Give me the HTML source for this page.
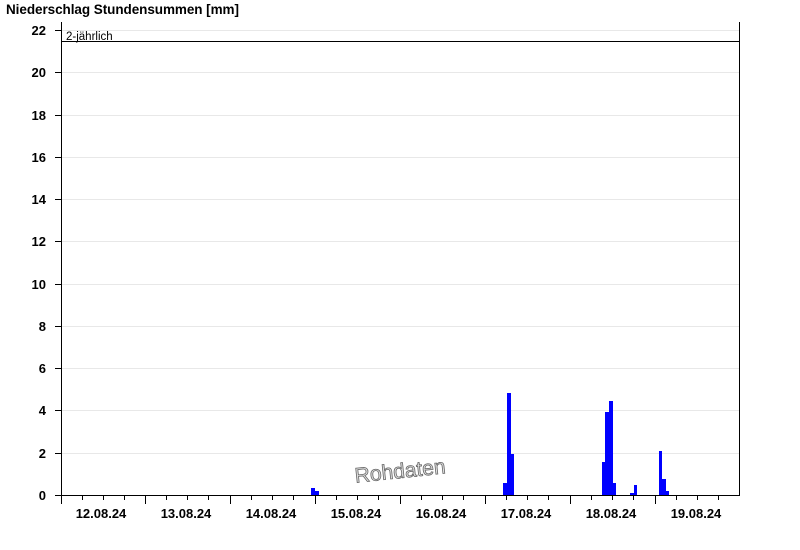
<!DOCTYPE html>
<html><head><meta charset="utf-8"><style>
html,body{margin:0;padding:0;background:#fff;width:800px;height:550px;overflow:hidden}
svg{display:block}
text{font-family:"Liberation Sans",Arial,sans-serif}
</style></head><body>
<svg width="800" height="550" viewBox="0 0 800 550" xmlns="http://www.w3.org/2000/svg">
<text x="6" y="14" font-size="13.5" font-weight="bold" fill="#000" textLength="233">Niederschlag Stundensummen [mm]</text>
<g stroke="#e8e8e8" stroke-width="1">
<line x1="61" x2="739" y1="453.5" y2="453.5"/><line x1="61" x2="739" y1="410.5" y2="410.5"/>
<line x1="61" x2="739" y1="368.5" y2="368.5"/><line x1="61" x2="739" y1="326.5" y2="326.5"/>
<line x1="61" x2="739" y1="284.5" y2="284.5"/><line x1="61" x2="739" y1="241.5" y2="241.5"/>
<line x1="61" x2="739" y1="199.5" y2="199.5"/><line x1="61" x2="739" y1="157.5" y2="157.5"/>
<line x1="61" x2="739" y1="115.5" y2="115.5"/><line x1="61" x2="739" y1="72.5" y2="72.5"/>
<line x1="61" x2="739" y1="30.5" y2="30.5"/>
</g>
<g fill="#0000ff">
<rect x="311" y="488" width="4" height="7"/><rect x="315" y="491" width="4" height="4"/>
<rect x="503" y="483" width="4" height="12"/><rect x="507" y="393" width="4" height="102"/><rect x="511" y="454" width="3" height="41"/>
<rect x="602" y="462" width="3" height="33"/><rect x="605" y="412" width="4" height="83"/><rect x="609" y="401" width="4" height="94"/><rect x="613" y="483" width="3" height="12"/>
<rect x="630" y="493" width="4" height="2"/><rect x="634" y="485" width="3" height="10"/>
<rect x="659" y="451" width="3" height="44"/><rect x="662" y="479" width="4" height="16"/><rect x="666" y="491" width="3" height="4"/>
</g>
<g stroke="#000" stroke-width="1">
<line x1="61.5" y1="22" x2="61.5" y2="496"/>
<line x1="739.5" y1="22" x2="739.5" y2="496"/>
<line x1="61" y1="495.5" x2="740" y2="495.5"/>
<line x1="61" y1="41.5" x2="740" y2="41.5"/>
<line x1="55" x2="61" y1="495.5" y2="495.5"/><line x1="55" x2="61" y1="453.5" y2="453.5"/>
<line x1="55" x2="61" y1="410.5" y2="410.5"/><line x1="55" x2="61" y1="368.5" y2="368.5"/>
<line x1="55" x2="61" y1="326.5" y2="326.5"/><line x1="55" x2="61" y1="284.5" y2="284.5"/>
<line x1="55" x2="61" y1="241.5" y2="241.5"/><line x1="55" x2="61" y1="199.5" y2="199.5"/>
<line x1="55" x2="61" y1="157.5" y2="157.5"/><line x1="55" x2="61" y1="115.5" y2="115.5"/>
<line x1="55" x2="61" y1="72.5" y2="72.5"/><line x1="55" x2="61" y1="30.5" y2="30.5"/>
</g>
<g stroke="#000" stroke-width="1">
<line x1="61.5" x2="61.5" y1="495" y2="504"/><line x1="145.5" x2="145.5" y1="495" y2="504"/>
<line x1="230.5" x2="230.5" y1="495" y2="504"/><line x1="315.5" x2="315.5" y1="495" y2="504"/>
<line x1="400.5" x2="400.5" y1="495" y2="504"/><line x1="485.5" x2="485.5" y1="495" y2="504"/>
<line x1="570.5" x2="570.5" y1="495" y2="504"/><line x1="655.5" x2="655.5" y1="495" y2="504"/>
<line x1="82.5" x2="82.5" y1="495" y2="500"/><line x1="103.5" x2="103.5" y1="495" y2="500"/><line x1="124.5" x2="124.5" y1="495" y2="500"/>
<line x1="166.5" x2="166.5" y1="495" y2="500"/><line x1="187.5" x2="187.5" y1="495" y2="500"/><line x1="208.5" x2="208.5" y1="495" y2="500"/>
<line x1="251.5" x2="251.5" y1="495" y2="500"/><line x1="272.5" x2="272.5" y1="495" y2="500"/><line x1="293.5" x2="293.5" y1="495" y2="500"/>
<line x1="336.5" x2="336.5" y1="495" y2="500"/><line x1="357.5" x2="357.5" y1="495" y2="500"/><line x1="378.5" x2="378.5" y1="495" y2="500"/>
<line x1="421.5" x2="421.5" y1="495" y2="500"/><line x1="442.5" x2="442.5" y1="495" y2="500"/><line x1="463.5" x2="463.5" y1="495" y2="500"/>
<line x1="506.5" x2="506.5" y1="495" y2="500"/><line x1="527.5" x2="527.5" y1="495" y2="500"/><line x1="548.5" x2="548.5" y1="495" y2="500"/>
<line x1="591.5" x2="591.5" y1="495" y2="500"/><line x1="612.5" x2="612.5" y1="495" y2="500"/><line x1="633.5" x2="633.5" y1="495" y2="500"/>
<line x1="676.5" x2="676.5" y1="495" y2="500"/><line x1="697.5" x2="697.5" y1="495" y2="500"/><line x1="718.5" x2="718.5" y1="495" y2="500"/>
</g>
<g font-size="13" font-weight="bold" text-anchor="end" fill="#000">
<text x="46" y="500">0</text><text x="46" y="458">2</text><text x="46" y="415">4</text>
<text x="46" y="373">6</text><text x="46" y="331">8</text><text x="46" y="289">10</text>
<text x="46" y="246">12</text><text x="46" y="204">14</text><text x="46" y="162">16</text>
<text x="46" y="120">18</text><text x="46" y="77">20</text><text x="46" y="35">22</text>
</g>
<g font-size="13" font-weight="bold" text-anchor="middle" fill="#000">
<text x="101" y="518">12.08.24</text><text x="186" y="518">13.08.24</text>
<text x="271" y="518">14.08.24</text><text x="356" y="518">15.08.24</text>
<text x="441" y="518">16.08.24</text><text x="526" y="518">17.08.24</text>
<text x="611" y="518">18.08.24</text><text x="696" y="518">19.08.24</text>
</g>
<text x="66" y="40" font-size="11.5" fill="#000">2-jährlich</text>
<text x="400" y="478" font-size="21" fill="#e0e0e0" stroke="#666" stroke-width="0.8" text-anchor="middle" transform="rotate(-6 400 470)">Rohdaten</text>
</svg>
</body></html>
